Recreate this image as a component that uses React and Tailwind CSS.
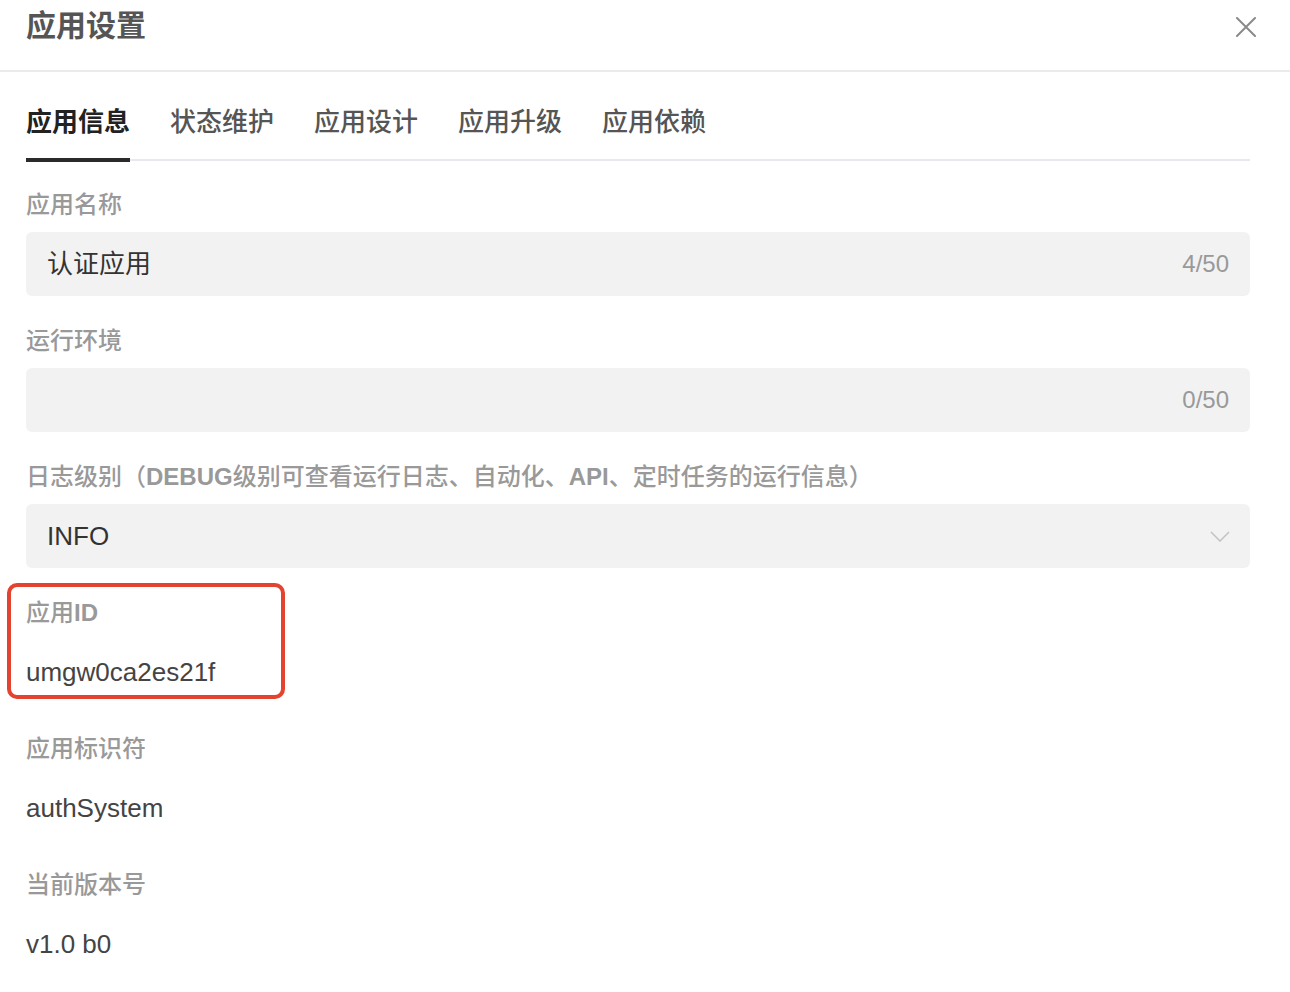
import React from "react";

function Field({ label, children }) {
  return (
    <div className="mb-[30px]">
      <div className="text-[24px] leading-[30px] font-medium text-[#999]">{label}</div>
      <div className="mt-[12px]">{children}</div>
    </div>
  );
}

function TextInput({ value, count }) {
  return (
    <div className="flex h-[64px] items-center justify-between rounded-[6px] bg-[#f2f2f2] pl-[21px] pr-[21px]">
      <span className="text-[26px] text-[#333]">{value}</span>
      <span className="text-[24px] text-[#999]">{count}</span>
    </div>
  );
}

function Display({ value }) {
  return <div className="flex h-[64px] items-center text-[26px] text-[#444]">{value}</div>;
}

export default function App() {
  const tabs = ["应用信息", "状态维护", "应用设计", "应用升级", "应用依赖"];
  return (
    <div className="min-h-[992px] bg-white font-['Liberation_Sans','Noto_Sans_CJK_SC',sans-serif]">
      <div className="flex h-[72px] items-start justify-between border-b-2 border-[#ebebeb] pl-[26px] pr-[34px]">
        <div className="mt-[6px] text-[30px] leading-[40px] font-semibold text-[#555]">应用设置</div>
        <svg className="mt-[17px]" width="20" height="20" viewBox="0 0 20 20" fill="none">
          <path d="M1 1L19 19M19 1L1 19" stroke="#8a8a8a" strokeWidth="2" strokeLinecap="round" />
        </svg>
      </div>
      <div className="pl-[26px] pr-[40px]">
        <div className="mt-[32px] flex gap-[40px] border-b-2 border-[#e8e8ee]">
          {tabs.map((t, i) => (
            <div
              key={t}
              className={
                i === 0
                  ? "-mb-[3px] border-b-4 border-[#2b2b2b] pb-[18px] text-[26px] leading-[36px] font-semibold text-[#222]"
                  : "-mb-[3px] border-b-4 border-transparent pb-[18px] text-[26px] leading-[36px] font-medium text-[#555]"
              }
            >
              {t}
            </div>
          ))}
        </div>
        <div className="mt-[29px]">
          <Field label="应用名称">
            <TextInput value="认证应用" count="4/50" />
          </Field>
          <Field label="运行环境">
            <TextInput value="" count="0/50" />
          </Field>
          <Field
            label={
              <>
                日志级别（<span className="font-bold">DEBUG</span>级别可查看运行日志、自动化、
                <span className="font-bold">API</span>、定时任务的运行信息）
              </>
            }
          >
            <div className="flex h-[64px] items-center justify-between rounded-[6px] bg-[#f2f2f2] pl-[21px] pr-[20px]">
              <span className="text-[26px] text-[#333]">INFO</span>
              <svg width="20" height="11" viewBox="0 0 20 11" fill="none">
                <path d="M1 1L10 10L19 1" stroke="#c2c2c2" strokeWidth="1.5" />
              </svg>
            </div>
          </Field>
          <div className="relative">
            <Field
              label={
                <>
                  应用<span className="font-bold">ID</span>
                </>
              }
            >
              <Display value="umgw0ca2es21f" />
            </Field>
            <div className="pointer-events-none absolute left-[-19px] top-[-15px] h-[116px] w-[278px] rounded-[10px] border-4 border-[#e4432f]" />
          </div>
          <Field label="应用标识符">
            <Display value="authSystem" />
          </Field>
          <Field label="当前版本号">
            <Display value="v1.0 b0" />
          </Field>
        </div>
      </div>
    </div>
  );
}
